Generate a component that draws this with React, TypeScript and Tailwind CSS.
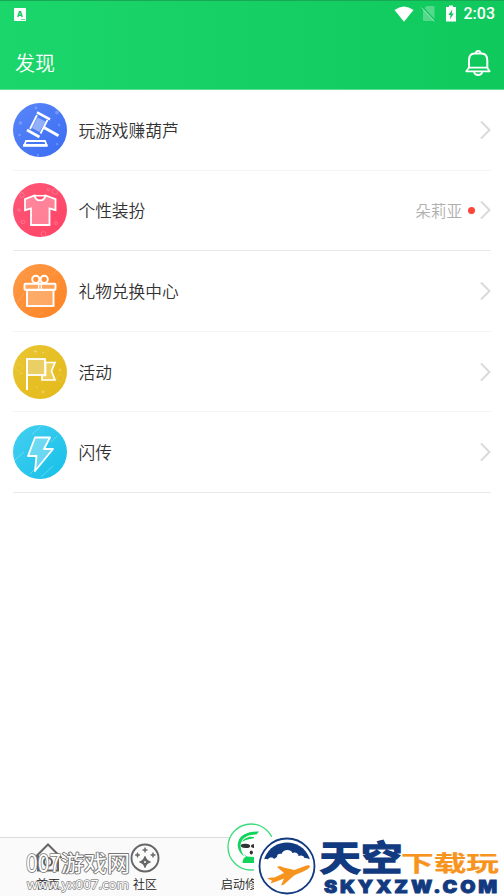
import type { ReactNode } from "react";

type DiscoverItem = {
  id: string;
  label: string;
  icon: ReactNode;
  hint?: string;
  strongDivider?: boolean;
};

function GavelIcon() {
  return (
    <svg viewBox="0 0 54 54" className="size-[54px]" fill="none" aria-hidden>
      <defs>
        <linearGradient id="gavel-bg" x1="0" y1="0" x2="1" y2="1">
          <stop stopColor="#5a86f9" />
          <stop offset="1" stopColor="#3a6cf3" />
        </linearGradient>
      </defs>
      <circle cx="27" cy="27" r="27" fill="url(#gavel-bg)" />
      <g fill="#fff" fillOpacity=".22">
        <circle cx="7.5" cy="20" r="1.8" />
        <circle cx="23" cy="5" r="1.4" />
        <circle cx="44" cy="9.5" r="2" />
        <circle cx="6.5" cy="32" r="1.3" />
        <circle cx="44" cy="41" r="1.2" />
        <circle cx="25" cy="52" r="1.2" />
        <circle cx="46" cy="22" r="1.2" />
      </g>
      <path d="M24.5 14.5 32.5 18.5 26.5 29 19 25Z" fill="#fff" fillOpacity=".4" />
      <g stroke="#fff" strokeWidth="1.8">
        <path d="M24 12 17 26M34.500 17 27.500 30.500" />
        <path d="M24 9.300 37 16.300M14 27 26.500 34" strokeWidth="2.6" />
        <path d="M31 24.500 45.500 32.800" strokeWidth="3" />
        <path d="M13 38H32L33.500 42H11.500Z" strokeWidth="1.8" />
        <path d="M10 42.500H34.500" strokeWidth="2.6" />
      </g>
    </svg>
  );
}

function ShirtIcon() {
  return (
    <svg viewBox="0 0 54 54" className="size-[54px]" fill="none" aria-hidden>
      <defs>
        <linearGradient id="shirt-bg" x1="0" y1="0" x2="1" y2="1">
          <stop stopColor="#ff5877" />
          <stop offset="1" stopColor="#ff4265" />
        </linearGradient>
      </defs>
      <circle cx="27" cy="27" r="27" fill="url(#shirt-bg)" />
      <g stroke="#fff" strokeOpacity=".2">
        <circle cx="42" cy="8.5" r="2.8" />
        <circle cx="35.5" cy="6.5" r="1.3" />
        <circle cx="9" cy="12" r="2.3" />
        <circle cx="6" cy="27" r="1.4" />
        <circle cx="10" cy="39" r="1.8" />
        <circle cx="43" cy="40" r="1.5" />
        <circle cx="30.5" cy="51" r="2.5" />
      </g>
      <path
        d="M21.500 12.500C23 19 31 19 32.500 12.500L42.500 16.200V27.200L36.500 25.500V42H18V25.500L12 27.200V16.200Z"
        fill="#fff"
        fillOpacity=".3"
        stroke="#fff"
        strokeWidth="1.8"
      />
      <path d="M21.500 12.700H32.500" stroke="#fff" strokeWidth="1.5" />
    </svg>
  );
}

function GiftIcon() {
  return (
    <svg viewBox="0 0 54 54" className="size-[54px]" fill="none" aria-hidden>
      <defs>
        <linearGradient id="gift-bg" x1="0" y1="0" x2="1" y2="1">
          <stop stopColor="#fe9a48" />
          <stop offset="1" stopColor="#fd8324" />
        </linearGradient>
      </defs>
      <circle cx="27" cy="27" r="27" fill="url(#gift-bg)" />
      <path d="M5 38 11 29M39 11 45 5M8 43 12 38M44 21 47 18M26 51 30 48" stroke="#fff" strokeOpacity=".15" />
      <g stroke="#fff" strokeWidth="1.9">
        <rect x="14" y="26" width="26.5" height="16" fill="#fff" fillOpacity=".25" />
        <rect x="11.5" y="19.8" width="31" height="6" rx=".8" fill="#fff" fillOpacity=".2" />
        <circle cx="22.8" cy="15.3" r="3.6" />
        <circle cx="31.2" cy="15.3" r="3.6" />
        <path d="M25.700 17.500V25.500M28.300 17.500V25.500" strokeWidth="1.3" />
      </g>
    </svg>
  );
}

function FlagIcon() {
  return (
    <svg viewBox="0 0 54 54" className="size-[54px]" fill="none" aria-hidden>
      <defs>
        <linearGradient id="flag-bg" x1="0" y1="0" x2="1" y2="1">
          <stop stopColor="#e9c632" />
          <stop offset="1" stopColor="#e4b91b" />
        </linearGradient>
      </defs>
      <circle cx="27" cy="27" r="27" fill="url(#flag-bg)" />
      <g stroke="#fff" strokeOpacity=".25">
        <path d="M22.500 4.500V8.500M20.500 6.500H24.500M29 7.500H31M47 23.500V26.500M45.500 25H48.500M30 45V49M28 47H32M23 42H25M7 28.500H9.500" />
        <circle cx="6" cy="22.5" r="3.5" strokeDasharray="1.4 1.3" />
        <circle cx="47.5" cy="33" r="3.5" strokeDasharray="1.4 1.3" />
      </g>
      <g stroke="#fff">
        <path d="M32.500 17.500H42L38.500 26 42 35H29V30.500H32.500Z" fill="#fff" fillOpacity=".25" strokeWidth="1.7" />
        <rect x="14" y="14" width="18" height="16" fill="#e9cf66" strokeWidth="1.8" />
        <path d="M14 13V45" strokeWidth="2" />
      </g>
    </svg>
  );
}

function BoltIcon() {
  return (
    <svg viewBox="0 0 54 54" className="size-[54px]" fill="none" aria-hidden>
      <defs>
        <linearGradient id="bolt-bg" x1="0" y1="0" x2="1" y2="1">
          <stop stopColor="#45cff1" />
          <stop offset="1" stopColor="#15c0e8" />
        </linearGradient>
      </defs>
      <circle cx="27" cy="27" r="27" fill="url(#bolt-bg)" />
      <path d="M19 9.500 28 1M38 17 44 11M2 35 11 27M28 52 40 41M17 49 23 43" stroke="#fff" strokeOpacity=".28" />
      <path
        d="M22 12.500H37L31 24H40L22 46L23.500 31H15Z"
        fill="#fff"
        fillOpacity=".3"
        stroke="#fff"
        strokeWidth="1.8"
        strokeLinejoin="round"
      />
    </svg>
  );
}

function BellIcon() {
  return (
    <svg viewBox="0 0 26 28" className="h-7 w-[26px]" fill="none" stroke="#fff" strokeWidth="2" aria-hidden>
      <path d="M4 19V11.500C4 6.500 6.500 4.500 9.500 4.500H16.500C20 4.500 22.300 6.500 22.300 11.500V19" />
      <path d="M3.800 18.700H22.200L24.700 22.300H1.300Z" strokeWidth="1.7" strokeLinejoin="round" />
      <path d="M10.800 4.300C10.800 1 15.500 1 15.500 4.300" strokeWidth="1.8" />
      <path d="M9 23C10 27 16.300 27 17.300 23" strokeWidth="1.8" />
    </svg>
  );
}

function StatusBar() {
  return (
    <div className="flex h-[25px] items-center pl-[14px] pr-[9px]">
      <svg viewBox="0 0 12 13" className="mt-px h-[13px] w-3" aria-hidden>
        <rect width="12" height="13" rx=".8" fill="#fff" />
        <path d="M3.800 9 5.500 3.800H6.500L8.200 9M4.500 7.300H7.500" stroke="#18cd65" strokeWidth="1.5" fill="none" />
        <path d="M7 11.500H11" stroke="#18cd65" strokeWidth=".7" />
      </svg>
      <div className="ml-auto flex items-center">
        <svg viewBox="0 0 20 16" className="h-4 w-5" aria-hidden>
          <path d="M.5 4Q10-3 19.500 4L10 15.800Z" fill="#fff" />
        </svg>
        <svg viewBox="0 0 15 17" className="ml-[7px] h-[17px] w-[15px]" aria-hidden>
          <path d="M5.500 1H12.500Q13.500 1 13.500 2V15Q13.500 16 12.500 16H3Q2 16 2 15V4.500Z" fill="#fff" fillOpacity=".28" />
          <path d="M1.500 2 14.500 16" stroke="#11c75e" strokeWidth="1.5" />
          <path d="M.5 2.500 13.500 16.500" stroke="#fff" strokeOpacity=".45" strokeWidth="1" />
        </svg>
        <svg viewBox="0 0 12 17" className="ml-[9px] h-[17px] w-3" aria-hidden>
          <path d="M4 .5H8V2H11V16.500H1V2H4Z" fill="#fff" />
          <path d="M7.300 4.500 3.300 10H5.500L5 14.200 8.800 8.500H6.700Z" fill="#11c75e" />
        </svg>
        <span className="ml-[7px] mt-px font-[Roboto,sans-serif] text-[16px] font-medium leading-none text-white">2:03</span>
      </div>
    </div>
  );
}

const items: DiscoverItem[] = [
  { id: "games", label: "玩游戏赚葫芦", icon: <GavelIcon /> },
  { id: "outfit", label: "个性装扮", icon: <ShirtIcon />, hint: "朵莉亚", strongDivider: true },
  { id: "gifts", label: "礼物兑换中心", icon: <GiftIcon /> },
  { id: "events", label: "活动", icon: <FlagIcon /> },
  { id: "transfer", label: "闪传", icon: <BoltIcon />, strongDivider: true },
];

function DiscoverRow({ item }: { item: DiscoverItem }) {
  return (
    <li
      className={`flex h-[80.600px] items-center border-b ${
        item.strongDivider ? "border-[#e8e8e8]" : "border-[#f4f4f4]"
      }`}
    >
      {item.icon}
      <span className="ml-[11.500px] text-[16.700px] font-[350] leading-6 text-[#333]">{item.label}</span>
      <div className="ml-auto flex items-center">
        {item.hint && (
          <>
            <span className="text-[15.600px] font-[350] leading-6 text-[#b0b0b0]">{item.hint}</span>
            <span className="ml-[5.500px] mr-[5.500px] size-[7px] rounded-full bg-[#fb4639]" />
          </>
        )}
        <svg viewBox="0 0 11 20" className="h-5 w-[11px]" fill="none" stroke="#dadada" strokeWidth="2" aria-hidden>
          <path d="M1 1.500 9.500 10 1 18.500" />
        </svg>
      </div>
    </li>
  );
}

function TabBar() {
  return (
    <nav className="flex h-[59px] shrink-0 border-t border-[#dcdcdc] bg-[#fafafa] text-xs font-[350] leading-4 text-[#222]">
      <div className="flex w-24 flex-col items-center pt-1">
        <svg viewBox="0 0 32 32" className="size-8" fill="none" stroke="#666" strokeWidth="2" aria-hidden>
          <path d="M2.500 16 16 2.500 29.500 16M6 13V28.500H26V13" />
          <circle cx="16" cy="20" r="4" />
        </svg>
        <span className="mt-[2px]">首页</span>
      </div>
      <div className="flex w-[98px] flex-col items-center pt-1">
        <svg viewBox="0 0 32 32" className="size-8" fill="#666" aria-hidden>
          <circle cx="16" cy="16" r="13.5" fill="none" stroke="#666" strokeWidth="1.9" />
          <path d="M16 14.500Q17 19 21.500 20Q17 21 16 25.500Q15 21 10.500 20Q15 19 16 14.500Z" stroke="#666" strokeWidth="1.2" />
          <path
            d="M16 5.500 16.700 7.300 18.500 8 16.700 8.700 16 10.500 15.300 8.700 13.500 8 15.300 7.300ZM8.500 10.500 9.200 12.300 11 13 9.200 13.700 8.500 15.500 7.800 13.700 6 13 7.800 12.300ZM24 10.500 24.700 12.300 26.500 13 24.700 13.700 24 15.500 23.300 13.700 21.500 13 23.300 12.300Z"
            stroke="#666"
            strokeWidth=".6"
          />
          <circle cx="16" cy="20" r="1" fill="#fff" />
        </svg>
        <span className="mt-[2px]">社区</span>
      </div>
      <div className="flex w-[114px] flex-col items-center">
        <svg viewBox="0 0 48 48" className="-mt-[15px] size-12 shrink-0" aria-hidden>
          <circle cx="24" cy="24" r="23" fill="#fff" stroke="#3bdc7d" strokeWidth="1.3" />
          <path
            d="M17 33C11.500 29.500 9.500 23 11.500 18C14 11.500 21 8.500 32 8.500L29.500 11.500C22 11.500 17 14 15 17.500C12.500 22 13.500 28 17 33Z"
            fill="#12d45d"
          />
          <path d="M15 19C18 13.500 24 13 30 14.500C24 16 20 16 15 19Z" fill="#12d45d" />
          <path d="M16 30.500 20 33.500 27 34V40H15.500C15.500 36.500 17 34.500 19 33.500Z" fill="#12d45d" />
          <ellipse cx="18.5" cy="22.8" rx="4.7" ry="2.1" fill="#333" transform="rotate(5 18.5 22.8)" />
          <ellipse cx="28" cy="23" rx="4" ry="2" fill="#333" />
          <ellipse cx="24.3" cy="29.5" rx="1.6" ry="2.1" fill="#333" />
        </svg>
        <span className="mt-[5px]">启动修改器</span>
      </div>
    </nav>
  );
}

function SiteMark() {
  return (
    <svg
      viewBox="0 0 140 47"
      className="absolute left-6 top-[847px] h-[47px] w-[140px] font-['Noto_Sans_CJK_SC',sans-serif]"
      fill="#fff"
      stroke="#777"
      strokeLinejoin="round"
      paintOrder="stroke"
    >
      <text x="2" y="25" fontSize="25" strokeWidth="1.6" textLength="35" lengthAdjust="spacingAndGlyphs">
        007
      </text>
      <text x="37" y="24" fontSize="22" strokeWidth="1.8" textLength="69" lengthAdjust="spacingAndGlyphs">
        游戏网
      </text>
      <text
        x="3"
        y="42"
        fontSize="13"
        stroke="#8c8c8c"
        strokeWidth="1.5"
        textLength="102"
        lengthAdjust="spacingAndGlyphs"
        className="font-['Open_Sans',sans-serif]"
      >
        www.yx007.com
      </text>
    </svg>
  );
}

function DownloadBanner() {
  return (
    <div className="absolute left-[254px] top-[837px] h-[59px] w-[250px] bg-white">
      <svg viewBox="0 0 250 59" className="h-[59px] w-[250px] font-['Noto_Sans_CJK_SC',sans-serif]">
        <circle cx="33" cy="29" r="27.5" fill="#fff" stroke="#123a80" strokeWidth="1.8" />
        <path d="M10.500 21C15 10 24 5.500 33 5.500C42 5.500 51 10 55.500 21V23H10.500Z" fill="#123a80" />
        <path
          d="M8.500 24C10 22 12 21.500 14 22.500C15 20 19 20 20 22C22 21 22 20 23 20C22.500 17 26 16 27.500 17C29 12 37 12 38.500 16C41 14.500 44.500 16 44.500 19C47.500 17.500 50 19 50.500 21C53 20.500 55 22 57.500 23V27H8.500Z"
          fill="#fff"
        />
        <path
          d="M13 41.500 17 40.500 20.500 40.500 30 36 23 30C24.500 28.800 27 29.500 29.500 30.500L40.500 33 51 29C54.500 27.500 57 28.500 55.500 30.500C53.500 33 46 36 40 38.500L30 47.500 27 48.500 30 41.500 21 45L16.500 46.500 18 43.500Z"
          fill="#f7941d"
        />
        <g fill="#123a80" stroke="#123a80">
          <g transform="translate(65.500 34.300) scale(1.120 .940)">
            <text fontSize="37" fontWeight="700" strokeWidth="1.4">
              天空
            </text>
          </g>
          <text
            x="70"
            y="56"
            fontSize="18"
            fontWeight="900"
            letterSpacing="2.6"
            strokeWidth=".9"
            textLength="176"
            lengthAdjust="spacingAndGlyphs"
            className="font-['Inter',sans-serif]"
          >
            SKYXZW.COM
          </text>
        </g>
        <g transform="translate(147 34.300) scale(1.520 1)">
          <text fontSize="21.500" fontWeight="700" fill="#f7941d" stroke="#f7941d" strokeWidth=".2">
            下载玩
          </text>
        </g>
      </svg>
    </div>
  );
}

export default function App() {
  return (
    <div className="relative flex h-[896px] w-[504px] flex-col overflow-hidden bg-white font-['Noto_Sans_CJK_SC',sans-serif]">
      <header className="h-[90px] shrink-0 border-b border-t border-b-[#5bdf92] border-t-[#17a854] bg-linear-to-r from-[#1bd66b] to-[#10c95d]">
        <StatusBar />
        <div className="flex h-[63px] items-center justify-between pl-[15px] pr-[13px] pt-[11px]">
          <h1 className="text-[20px] font-[350] leading-7 text-white">发现</h1>
          <BellIcon />
        </div>
      </header>
      <main className="flex-1">
        <ul className="mx-[13px]">
          {items.map((item) => (
            <DiscoverRow key={item.id} item={item} />
          ))}
        </ul>
      </main>
      <TabBar />
      <SiteMark />
      <DownloadBanner />
    </div>
  );
}
